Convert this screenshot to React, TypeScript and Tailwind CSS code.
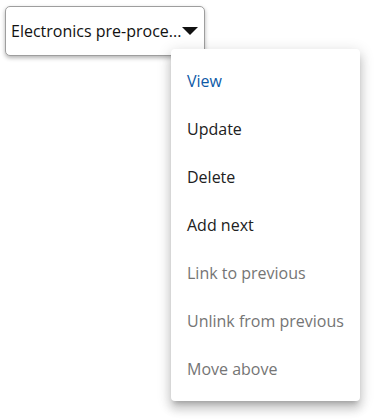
import { useState } from 'react'

const items = [
  { label: 'View', kind: 'active' },
  { label: 'Update', kind: 'normal' },
  { label: 'Delete', kind: 'normal' },
  { label: 'Add next', kind: 'normal' },
  { label: 'Link to previous', kind: 'disabled' },
  { label: 'Unlink from previous', kind: 'disabled' },
  { label: 'Move above', kind: 'disabled' },
]

export default function App() {
  const [open] = useState(true)

  return (
    <div className="relative w-[377px] h-[420px] bg-white font-['Open_Sans',sans-serif]">
      <div className="pt-[6px] pl-[5px]">
        <button className="flex items-center w-[200px] h-[50px] pl-[5px] pr-[6px] rounded-[5px] border border-[#9e9e9e] bg-white shadow-[0_2px_4px_rgba(0,0,0,0.3)] text-[16px] text-[#111]">
          <span className="whitespace-nowrap">Electronics pre-proce...</span>
          <svg width="16" height="8" viewBox="0 0 16 8" className="ml-[1px] shrink-0">
            <path d="M0 0 L16 0 L8 8 Z" fill="#111" />
          </svg>
        </button>
      </div>

      {open && (
        <div className="absolute left-[171px] top-[49px] w-[189px] py-[8px] rounded-[4px] bg-white shadow-[0_5px_5px_-3px_rgba(0,0,0,0.2),0_8px_10px_1px_rgba(0,0,0,0.14),0_3px_14px_2px_rgba(0,0,0,0.12)]">
          {items.map((item) => (
            <div
              key={item.label}
              className={`flex items-center h-[48px] px-[16px] text-[16px] whitespace-nowrap ${
                item.kind === 'active'
                  ? 'text-[#0d5aa7]'
                  : item.kind === 'disabled'
                  ? 'text-[#757575]'
                  : 'text-[#212121]'
              }`}
            >
              {item.label}
            </div>
          ))}
        </div>
      )}
    </div>
  )
}
